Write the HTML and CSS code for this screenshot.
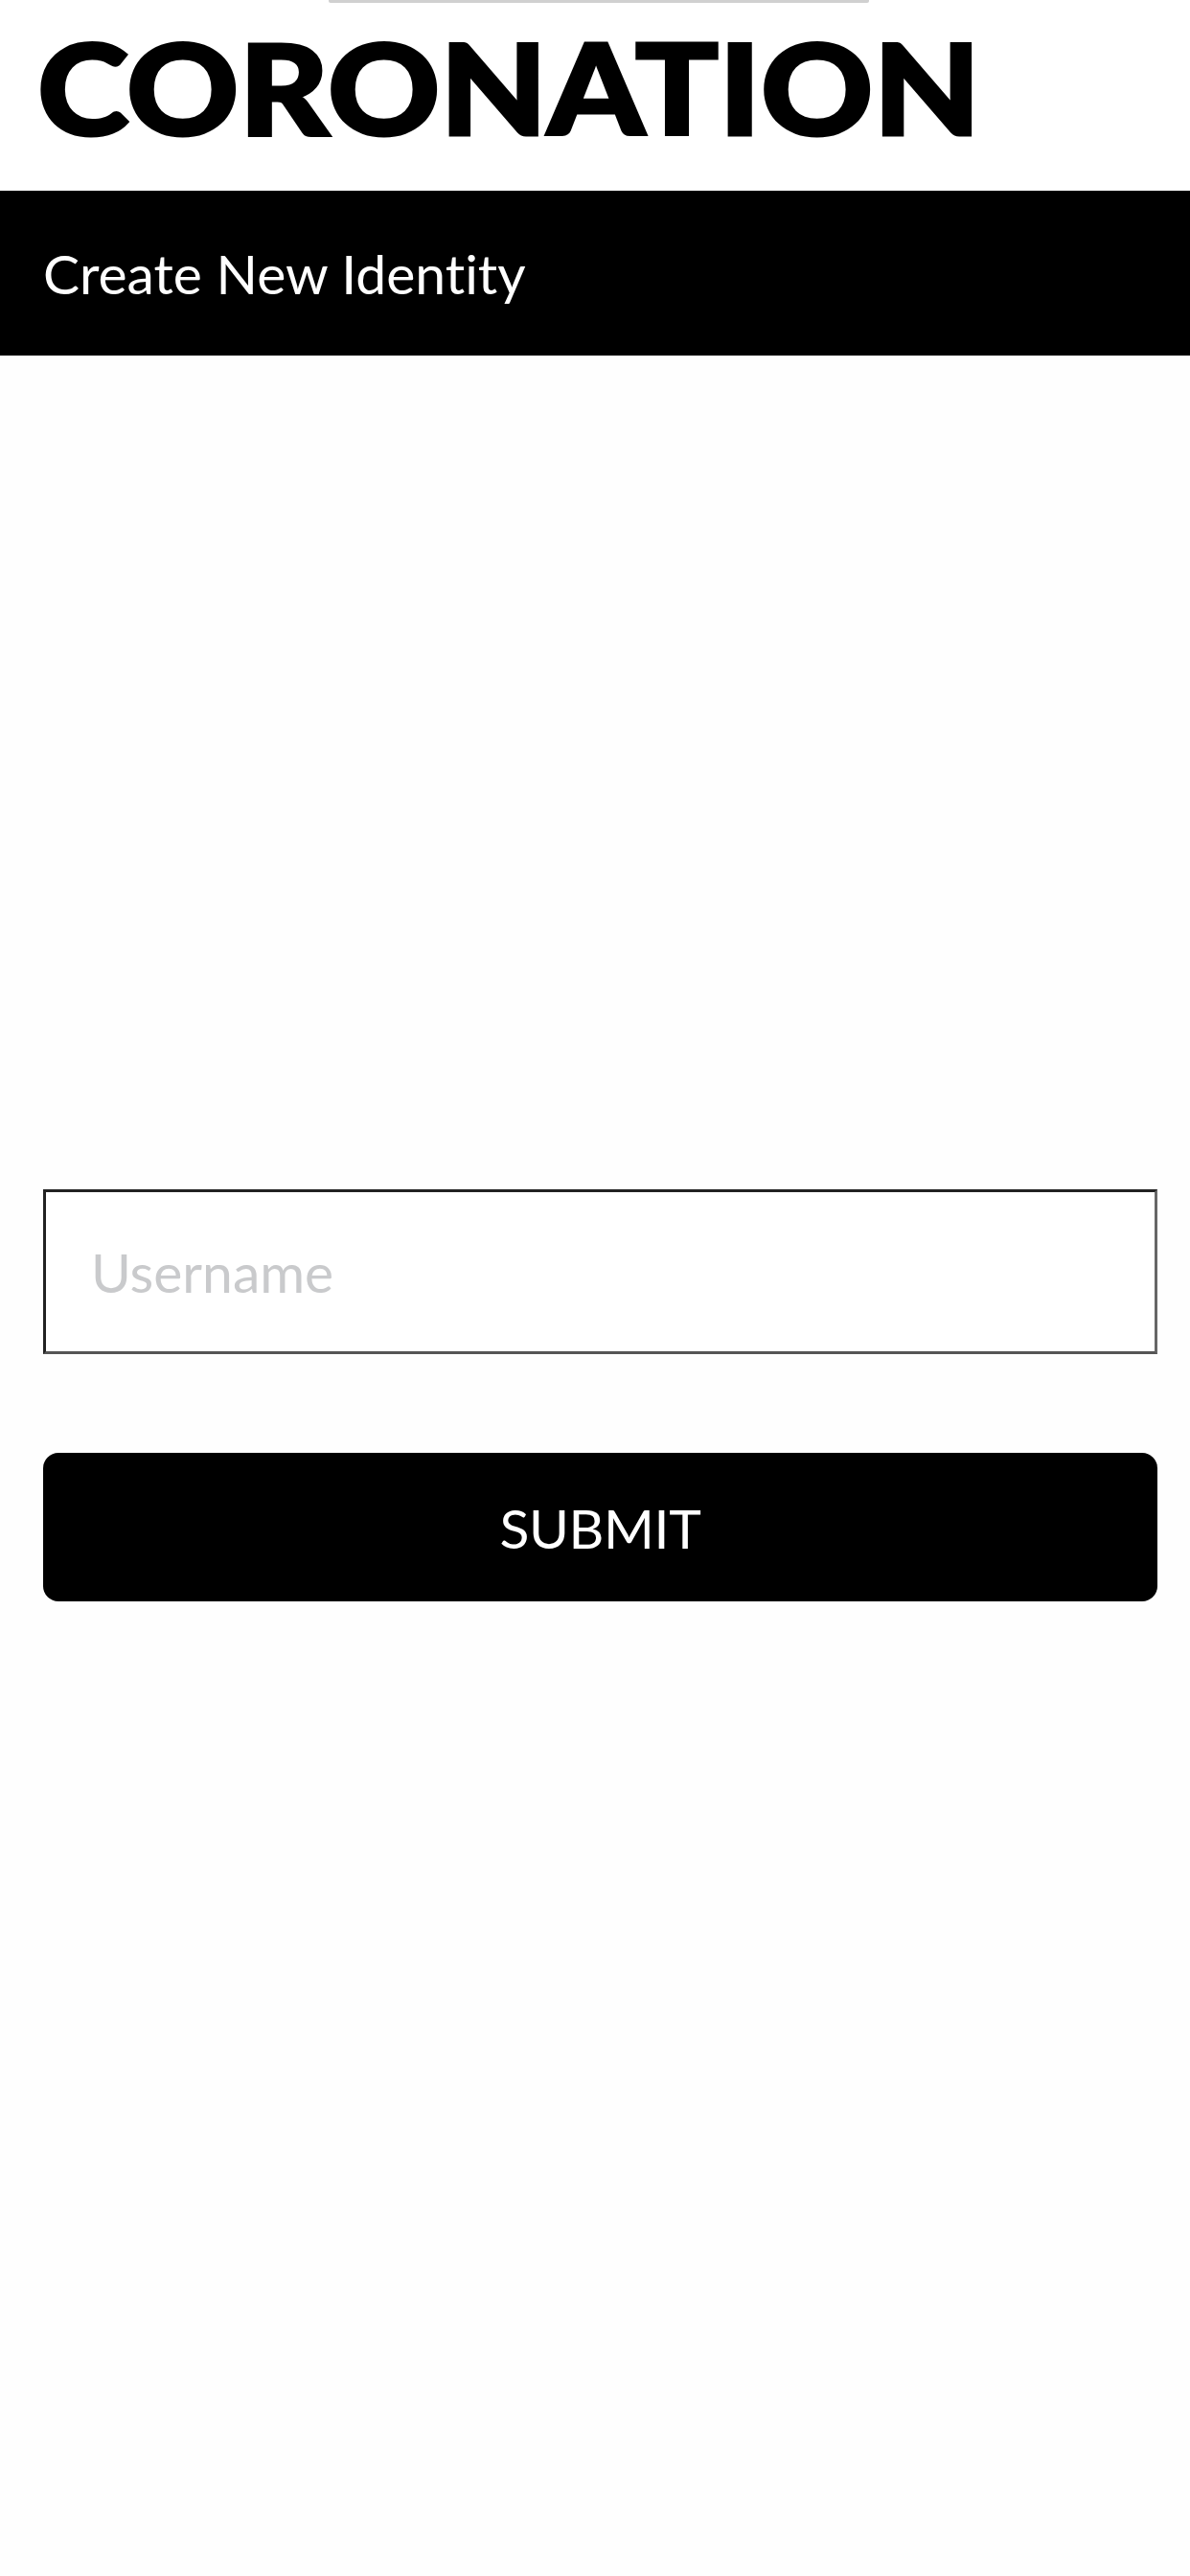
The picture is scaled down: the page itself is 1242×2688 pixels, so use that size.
FILE: index.html
```html
<!DOCTYPE html>
<html lang="en">
<head>
<meta charset="utf-8">
<title>Coronation</title>
<link rel="stylesheet" href="styles.css">
</head>
<body>
<div class="notch"></div>
<header class="brand"><h1 class="logo">CORONATION</h1></header>
<div class="title-bar"><h2 class="title">Create New Identity</h2></div>
<main class="content">
  <form class="form">
    <input class="field" type="text" placeholder="Username">
    <button class="submit" type="button">SUBMIT</button>
  </form>
</main>
</body>
</html>
```
FILE: styles.css
```css
* { box-sizing: border-box; }
html, body { margin: 0; padding: 0; }
body {
  position: relative;
  width: 1242px;
  height: 2688px;
  background: #fefefe;
  font-family: Lato, "Liberation Sans", sans-serif;
  font-variant-ligatures: none;
  overflow: hidden;
}
.notch {
  position: absolute;
  top: 0;
  left: 343px;
  width: 564px;
  height: 3px;
  background: #d0d0d0;
  border-radius: 0 0 2px 2px;
}
.brand {
  height: 199px;
  padding: 24px 0 0 39px;
  background: #fff;
}
.logo {
  display: inline-block;
  margin: 0;
  font-size: 132px;
  line-height: 132px;
  font-weight: 900;
  color: #000;
  white-space: nowrap;
  transform: scaleX(1.097);
  transform-origin: left center;
  -webkit-text-stroke: 3px #000;
}
.title-bar {
  height: 172px;
  display: flex;
  align-items: center;
  padding-left: 45px;
  background: #000;
}
.title {
  margin: 0;
  font-size: 57px;
  font-weight: 400;
  color: #fff;
}
.content {
  padding: 870px 34px 0 45px;
}
.form {
  display: flex;
  flex-direction: column;
  gap: 103px;
}
.field {
  width: 100%;
  height: 172px;
  padding: 0 0 0 47px;
  border-style: solid;
  border-width: 3px;
  border-color: #222 #666 #555 #222;
  border-radius: 0;
  background: #fff;
  font-family: inherit;
  font-size: 57px;
  font-variant-ligatures: none;
  outline: none;
}
.field::placeholder { color: #c9cacc; opacity: 1; }
.submit {
  width: 100%;
  height: 155px;
  border: 0;
  border-radius: 16px;
  background: #000;
  color: #fff;
  font-family: inherit;
  font-size: 57px;
  font-weight: 400;
  letter-spacing: -0.4px;
}
```
